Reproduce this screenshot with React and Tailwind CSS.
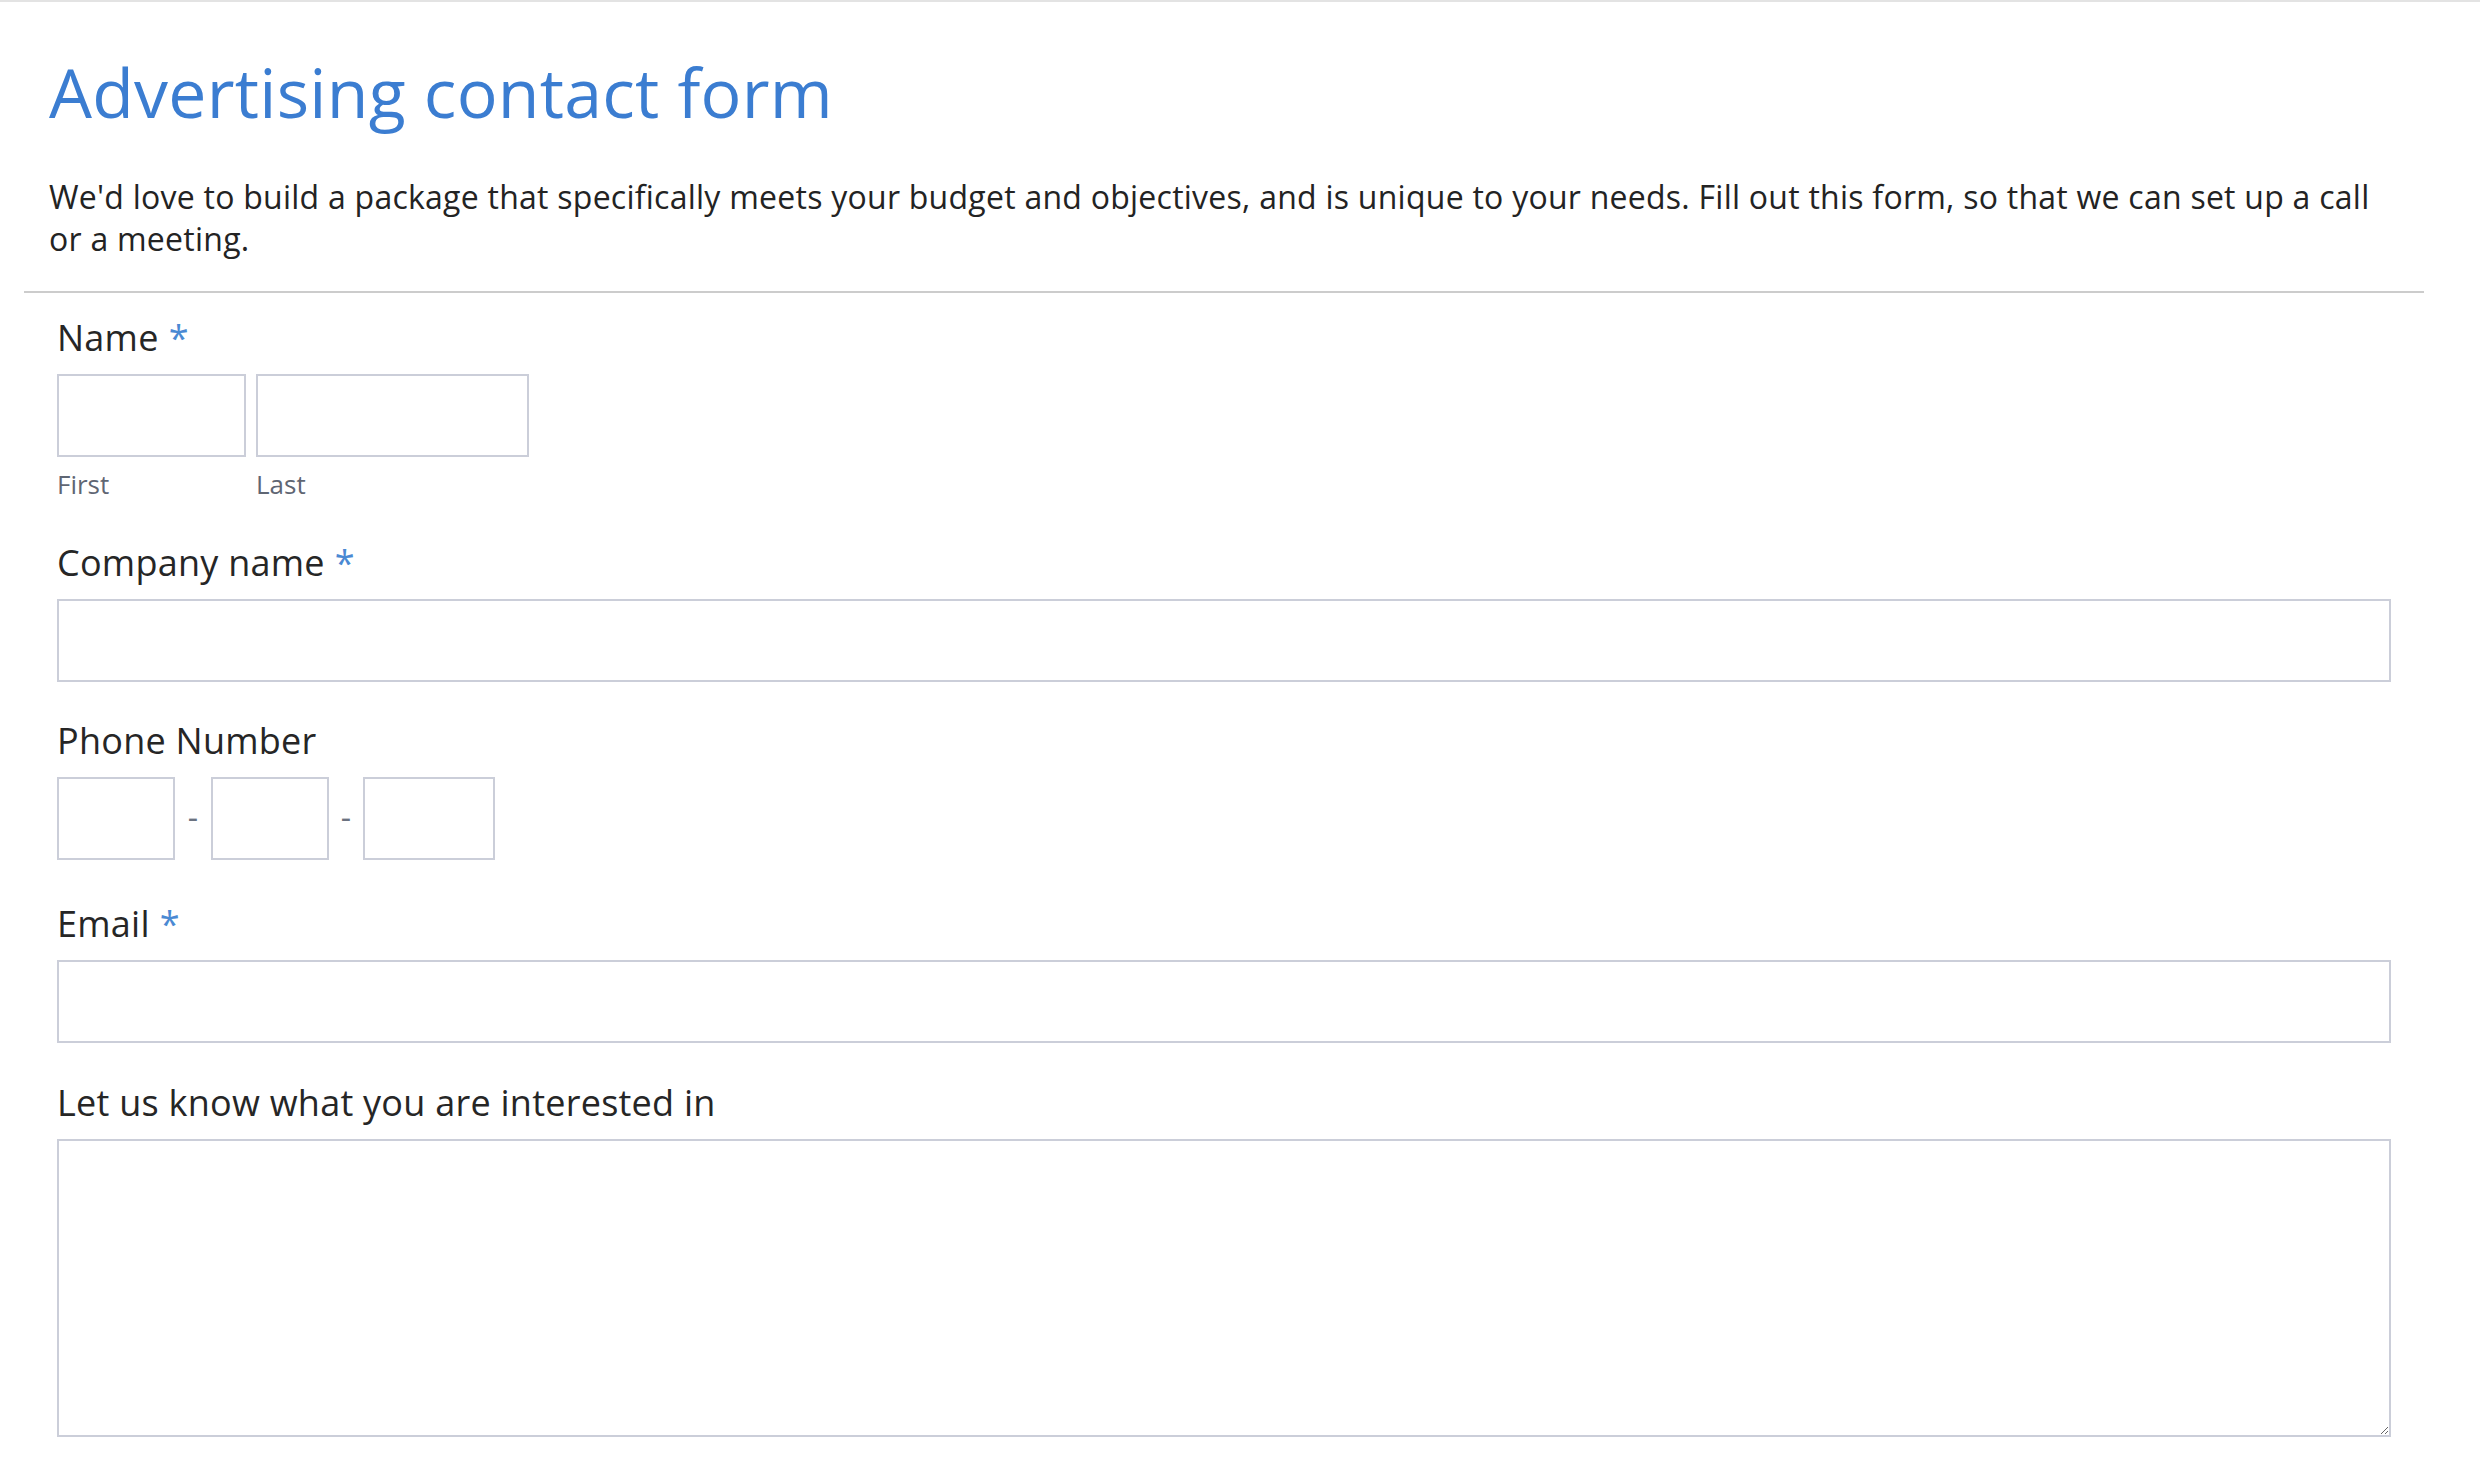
import React from 'react';

// Advertising contact form - static recreation

const Label = ({ children, required, className = '' }) => (
  <label className={`block text-[36px] leading-[44px] tracking-[0.25px] text-[#262626] mb-[14px] ${className}`}>
    {children}
    {required && <span className="text-[#4a89d3] ml-[10px]">*</span>}
  </label>
);

const boxCls = 'block h-[83px] border-2 border-[#cbced9] bg-white outline-none';

export default function App() {
  return (
    <div className="min-h-screen bg-white border-t-2 border-[#e3e3e3] font-['Open_Sans',sans-serif]">
      <div className="ml-[24px] w-[2400px]">
        {/* header */}
        <header className="px-[25px] pb-[31px] border-b-2 border-[#cccccc]">
          <h1 className="pt-[56px] text-[68px] leading-[68px] tracking-[0.25px] text-[#3b7dd1] font-normal">
            Advertising contact form
          </h1>
          <p className="mt-[50px] text-[32px] leading-[42px] tracking-[0.25px] text-[#232323]">
            We'd love to build a package that specifically meets your budget and objectives, and is unique to your needs. Fill out this form, so that we can set up a call or a meeting.
          </p>
        </header>

        <form className="px-[33px] pt-[23px]">
          {/* Name */}
          <div>
            <Label required>Name</Label>
            <div className="flex gap-[10px]">
              <div className="w-[189px]">
                <input type="text" className={`${boxCls} w-[189px]`} />
                <div className="mt-[11px] text-[26px] leading-[32px] text-[#5f6673]">First</div>
              </div>
              <div className="w-[273px]">
                <input type="text" className={`${boxCls} w-[273px]`} />
                <div className="mt-[11px] text-[26px] leading-[32px] text-[#5f6673]">Last</div>
              </div>
            </div>
          </div>

          {/* Company */}
          <div className="mt-[41px]">
            <Label required>Company name</Label>
            <input type="text" className={`${boxCls} w-full`} />
          </div>

          {/* Phone */}
          <div className="mt-[37px]">
            <Label>Phone Number</Label>
            <div className="flex items-center">
              <input type="text" className={`${boxCls} w-[118px]`} />
              <span className="w-[36px] text-center text-[32px] leading-[32px] text-[#6b7280] pb-[4px]">-</span>
              <input type="text" className={`${boxCls} w-[118px]`} />
              <span className="w-[34px] text-center text-[32px] leading-[32px] text-[#6b7280] pb-[4px]">-</span>
              <input type="text" className={`${boxCls} w-[132px]`} />
            </div>
          </div>

          {/* Email */}
          <div className="mt-[42px]">
            <Label required>Email</Label>
            <input type="email" className={`${boxCls} w-full`} />
          </div>

          {/* Interests */}
          <div className="mt-[38px]">
            <Label>Let us know what you are interested in</Label>
            <textarea className="block w-full h-[298px] border-2 border-[#cbced9] bg-white outline-none" />
          </div>
        </form>
      </div>
    </div>
  );
}
